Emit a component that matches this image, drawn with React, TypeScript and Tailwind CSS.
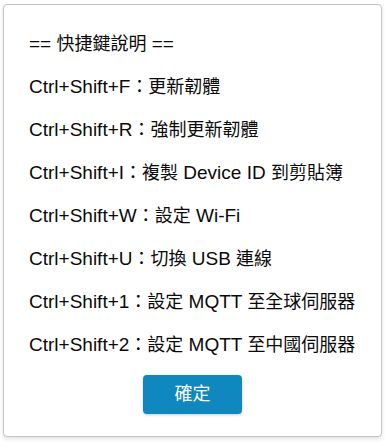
import React from "react";

const lines = [
  "== 快捷鍵說明 ==",
  "Ctrl+Shift+F：更新韌體",
  "Ctrl+Shift+R：強制更新韌體",
  "Ctrl+Shift+I：複製 Device ID 到剪貼簿",
  "Ctrl+Shift+W：設定 Wi-Fi",
  "Ctrl+Shift+U：切換 USB 連線",
  "Ctrl+Shift+1：設定 MQTT 至全球伺服器",
  "Ctrl+Shift+2：設定 MQTT 至中國伺服器",
];

function Line({ text }: { text: string }) {
  const parts = text.split(/([\u3000-\u9fff\uff00-\uffef]+)/).filter((p) => p.length > 0);
  return (
    <div className="leading-[43px] h-[43px] whitespace-nowrap">
      {parts.map((p, i) =>
        /[\u3000-\u9fff\uff00-\uffef]/.test(p) ? (
          <span key={i} className="text-[18px]">
            {p}
          </span>
        ) : (
          <span key={i} className="text-[19px]">
            {p}
          </span>
        )
      )}
    </div>
  );
}

export default function App() {
  return (
    <div className="w-[389px] h-[446px] bg-white pt-[4px] pl-[3px]">
      <div
        className="w-[379px] h-[433px] rounded-[4px] border border-[#c4c4c4] bg-white shadow-[0_2px_4px_rgba(0,0,0,0.12)] pt-[17px] pl-[25px] pr-[10px] flex flex-col text-[18px] text-[#0a0a0a]"
        style={{ fontFamily: '"Liberation Sans", "Noto Sans CJK TC", sans-serif' }}
      >
        {lines.map((l) => (
          <Line key={l} text={l} />
        ))}
        <div className="flex justify-center mt-[9px] -ml-[25px] -mr-[10px]">
          <button className="w-[99px] h-[39px] rounded-[4px] bg-[#0f88c0] text-white text-[18px] shadow-[0_1px_3px_rgba(0,0,0,0.2)]">
            確定
          </button>
        </div>
      </div>
    </div>
  );
}
